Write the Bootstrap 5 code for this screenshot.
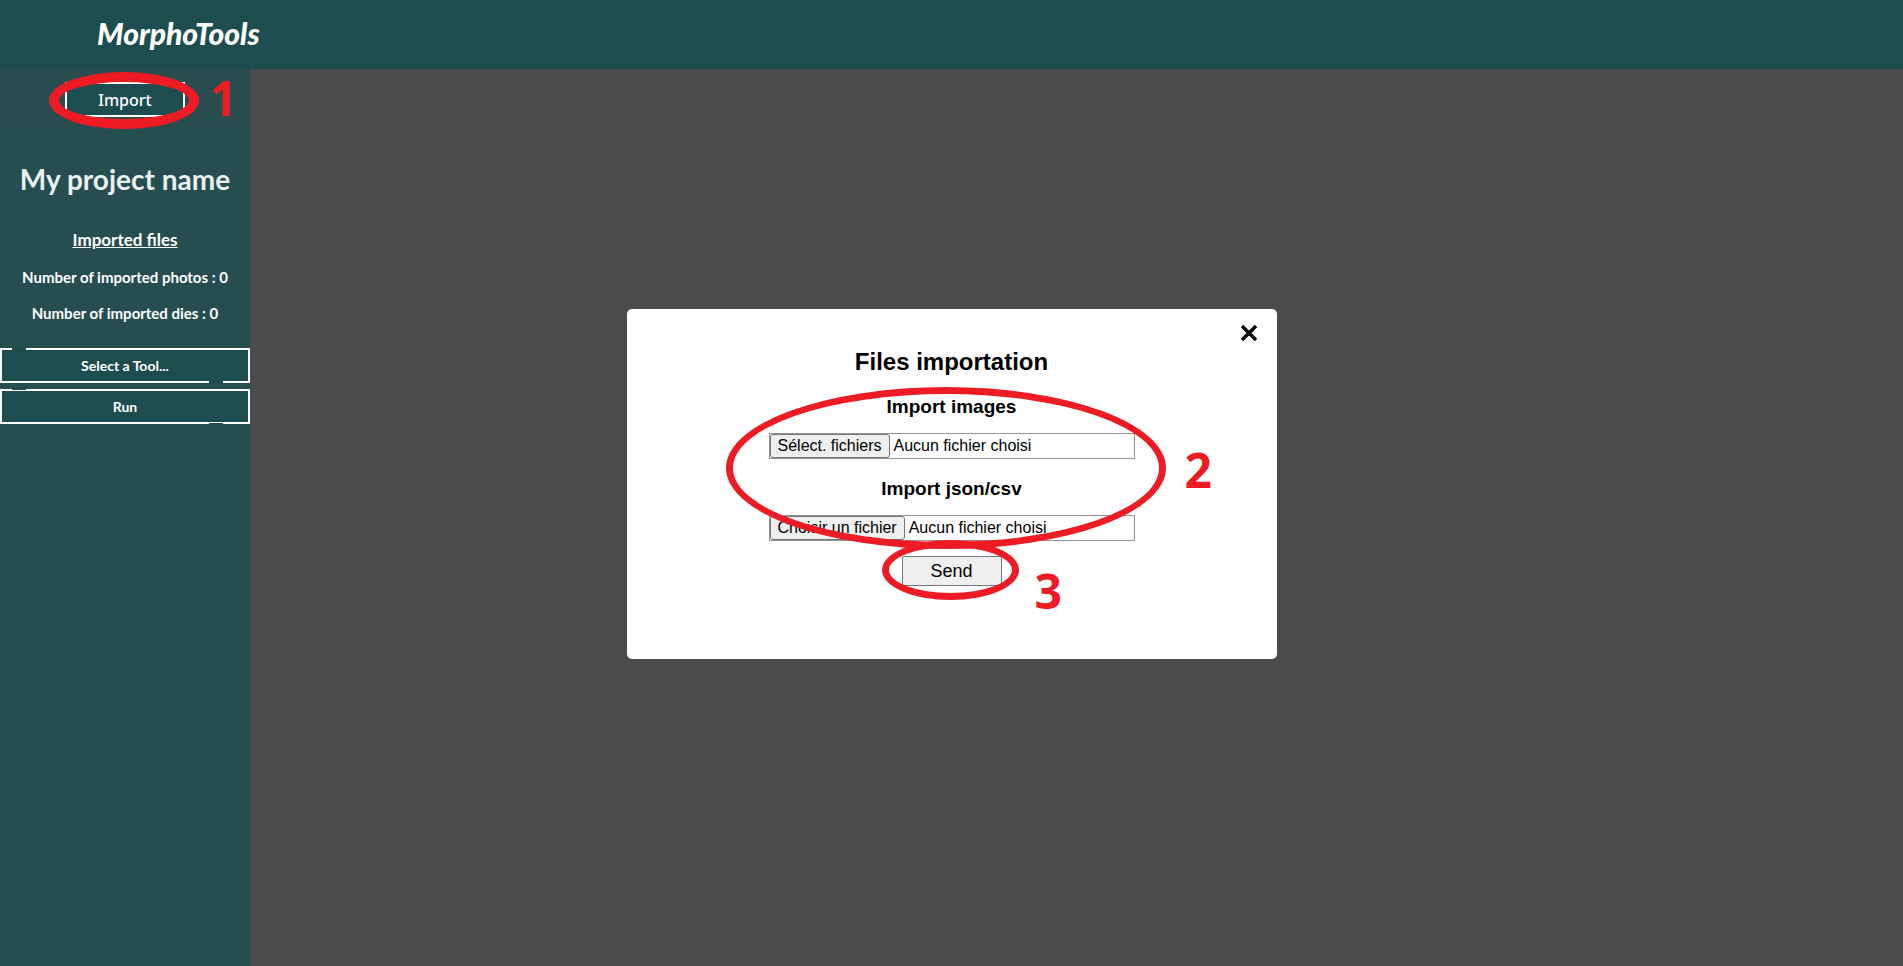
<!DOCTYPE html>
<html lang="en">
<head>
<meta charset="utf-8">
<meta name="viewport" content="width=device-width, initial-scale=1">
<title>MorphoTools</title>
<link href="https://cdn.jsdelivr.net/npm/bootstrap@5.3.0/dist/css/bootstrap.min.css" rel="stylesheet">
<style>
  :root { --teal: #1e4d50; --red: #ed1c24; }
  body { background: #4b4b4b; font-family: Lato, "Open Sans", sans-serif; }
  .top-bar { background: var(--teal); min-height: 69px; padding: 0 97px 4px; }
  .brand { color: #fff; font: italic 900 30px/36px Lato, sans-serif; }
  .side { width: 250px; background: #264d4f; color: #fff; text-align: center; }
  .side-tools { background: #294c4e; height: 58px; padding-top: 13px; }
  .side h1 { font-size: 28px; line-height: 36px; font-weight: 700; color: #e9f1f2; margin: 34px 0 31px; }
  .side h2 { font-size: 17px; line-height: 24px; font-weight: 700; margin: 0 0 15px; text-decoration: underline; }
  .side p { font-size: 15px; line-height: 20px; font-weight: 700; margin: 0 0 16px; }
  .tool-list { gap: 6px; margin-top: 25px; }
  .tool-btn { position: relative; height: 35px; padding: 0; border: 2px solid #fff; border-radius: 0; background: var(--teal); color: #fff; font: 700 14px/20px Lato, sans-serif; }
  .tool-btn:hover { background: #28666a; color: #fff; }
  .import-btn { width: 120px; font: 500 16px/20px "Noto Sans", sans-serif; }
  .notched::before, .notched::after { content: ""; position: absolute; width: 14px; height: 2px; background: var(--teal); }
  .notched::before { top: -2px; left: 10px; }
  .notched::after { bottom: -2px; right: 25px; }
  .notched.thin::before, .notched.thin::after { height: 1px; }
  .dialog-box { width: 650px; min-height: 350px; padding: 39px 0; background: #fff; border-radius: 5px; color: #000; font-family: "Liberation Sans", Arial, sans-serif; }
  .overlay { padding-top: 2px; }
  .dialog-box h2 { font-size: 24px; line-height: 28px; font-weight: 700; margin: 0 0 19px; }
  .dialog-box h3 { font-size: 19px; line-height: 24px; font-weight: 700; margin: 0 0 14px; }
  .close-btn { position: absolute; top: 11px; right: 15px; padding: 4px; border: 0; background: none; line-height: 0; }
  .file-pick { width: 366px; height: 26px; border: 1px solid #949494; font-size: 16px; line-height: 24px; cursor: pointer; }
  .file-pick + h3 { margin-top: 18px; }
  .file-pick .pick { height: 24px; line-height: 22px; border: 1px solid #767676; border-radius: 3px; background: #efefef; padding: 0 7px; }
  .file-pick .picked { padding-left: 4px; }
  .send-btn { width: 100px; height: 30px; margin-top: 15px; border: 1px solid #767676; border-radius: 2px; background: #efefef; color: #000; font-size: 18px; line-height: 28px; padding: 0; }
  /* tutorial marks drawn over the interface */
  .ring, .step { position: absolute; pointer-events: none; z-index: 5; }
  .ring { border: 7px solid var(--red); border-radius: 50%; }
  .step { color: var(--red); font: 700 48px/48px "Open Sans", sans-serif; }
  .ring-1 { left: 49px; top: 3px; width: 150px; height: 57px; border-width: 10px; }
  .step-1 { left: 210px; top: 5px; }
  .ring-2 { left: 99px; top: 78px; width: 440px; height: 162px; }
  .step-2 { left: 558px; top: 137px; }
  .ring-3 { left: 255px; top: 231px; width: 137px; height: 60px; }
  .step-3 { left: 408px; top: 258px; }
</style>
</head>
<body class="d-flex flex-column min-vh-100">
<header class="top-bar d-flex align-items-center">
  <a href="#" class="brand text-decoration-none">MorphoTools</a>
</header>
<div class="d-flex flex-grow-1">
  <aside class="side">
    <div class="side-tools position-relative">
      <button type="button" class="btn tool-btn import-btn">Import</button>
      <span class="ring ring-1"></span>
      <span class="step step-1">1</span>
    </div>
    <h1>My project name</h1>
    <h2>Imported files</h2>
    <p>Number of imported photos : 0</p>
    <p>Number of imported dies : 0</p>
    <div class="d-grid tool-list">
      <button type="button" class="btn tool-btn notched">Select a Tool...</button>
      <button type="button" class="btn tool-btn notched thin">Run</button>
    </div>
  </aside>
  <main class="flex-grow-1"></main>
</div>
<div class="overlay position-fixed top-0 start-0 w-100 h-100 d-flex align-items-center justify-content-center pe-none">
  <section class="dialog-box position-relative d-flex flex-column align-items-center pe-auto" role="dialog" aria-labelledby="dialog-title">
    <button type="button" class="close-btn" aria-label="Close">
      <svg width="18" height="18" viewBox="0 0 18 18" fill="none" stroke="#000" stroke-width="3.4"><path d="M2 2l14 14M16 2L2 16"/></svg>
    </button>
    <h2 id="dialog-title">Files importation</h2>
    <h3>Import images</h3>
    <label class="file-pick d-flex position-relative">
      <span class="pick">Sélect. fichiers</span><span class="picked">Aucun fichier choisi</span>
      <input type="file" class="visually-hidden" multiple accept="image/*">
    </label>
    <h3>Import json/csv</h3>
    <label class="file-pick d-flex position-relative">
      <span class="pick">Choisir un fichier</span><span class="picked">Aucun fichier choisi</span>
      <input type="file" class="visually-hidden" accept=".json,.csv">
    </label>
    <button type="submit" class="send-btn">Send</button>
    <span class="ring ring-2"></span>
    <span class="step step-2">2</span>
    <span class="ring ring-3"></span>
    <span class="step step-3">3</span>
  </section>
</div>
<script src="https://cdn.jsdelivr.net/npm/bootstrap@5.3.0/dist/js/bootstrap.bundle.min.js"></script>
</body>
</html>
